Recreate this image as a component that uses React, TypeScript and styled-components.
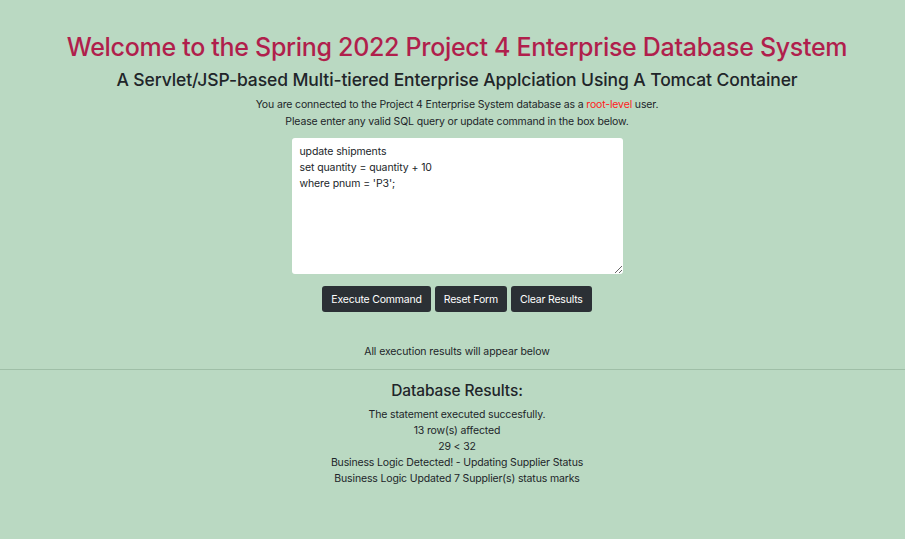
import React, { useState } from "react";
import styled, { createGlobalStyle } from "styled-components";

const GlobalStyle = createGlobalStyle`
  html, body {
    margin: 0;
    padding: 0;
    background: #bad9c2;
  }
  body {
    font-family: Inter, "Noto Sans", sans-serif;
    color: #212529;
  }
`;

const Page = styled.div`
  width: 100%;
  min-height: 539px;
  background: #bad9c2;
  padding-top: 30px;
  box-sizing: border-box;
  text-align: center;
`;

const Content = styled.div`
  padding-left: 9px;
`;

const Title = styled.h1`
  margin: 0;
  font-size: 25px;
  line-height: 34px;
  font-weight: 500;
  letter-spacing: -0.3px;
  color: #b01f4c;
`;

const Subtitle = styled.h2`
  margin: 0;
  font-size: 17.5px;
  line-height: 32px;
  font-weight: 500;
  letter-spacing: -0.1px;
  color: #212529;
`;

const Info = styled.p`
  margin: 0;
  font-size: 10.5px;
  line-height: 17px;
  letter-spacing: -0.15px;
`;

const RootLevel = styled.span`
  color: #ff1a1a;
`;

const Form = styled.form`
  display: flex;
  flex-direction: column;
  align-items: center;
  margin-top: 8px;
`;

const QueryBox = styled.textarea`
  width: 331px;
  height: 136px;
  box-sizing: border-box;
  padding: 6px 8px;
  border: none;
  border-radius: 3px;
  background: #ffffff;
  font-family: Inter, "Noto Sans", sans-serif;
  font-size: 10.5px;
  line-height: 16px;
  letter-spacing: -0.1px;
  color: #212529;
  resize: vertical;
  outline: none;
`;

const ButtonRow = styled.div`
  display: flex;
  gap: 4px;
  margin-top: 12px;
`;

const Button = styled.button`
  height: 26px;
  padding: 0 9px;
  border: none;
  border-radius: 3px;
  background: #2b3035;
  color: #ffffff;
  font-family: Inter, "Noto Sans", sans-serif;
  font-size: 10.5px;
  font-weight: 400;
  letter-spacing: -0.2px;
  cursor: pointer;
  &:hover {
    background: #1c1f23;
  }
`;

const Notice = styled.p`
  margin: 31px 0 0;
  font-size: 10.5px;
  line-height: 17px;
  letter-spacing: -0.1px;
`;

const Divider = styled.hr`
  margin: 9px 0 0;
  border: none;
  border-top: 1px solid #9fbfa7;
`;

const Results = styled.section`
  padding-top: 9px;
`;

const ResultsTitle = styled.h3`
  margin: 0 0 4px;
  font-size: 15.5px;
  line-height: 24px;
  font-weight: 500;
  letter-spacing: -0.1px;
`;

const ResultLine = styled.div`
  font-size: 10.5px;
  line-height: 16px;
  letter-spacing: -0.15px;
`;

const initialQuery = `update shipments
set quantity = quantity + 10
where pnum = 'P3';`;

const results = [
  "The statement executed succesfully.",
  "13 row(s) affected",
  "29 < 32",
  "Business Logic Detected! - Updating Supplier Status",
  "Business Logic Updated 7 Supplier(s) status marks",
];

export default function App() {
  const [query, setQuery] = useState<string>(initialQuery);
  const [lines, setLines] = useState<string[]>(results);

  return (
    <Page>
      <GlobalStyle />
      <Content>
        <Title>Welcome to the Spring 2022 Project 4 Enterprise Database System</Title>
        <Subtitle>A Servlet/JSP-based Multi-tiered Enterprise Applciation Using A Tomcat Container</Subtitle>
        <Info>
          You are connected to the Project 4 Enterprise System database as a <RootLevel>root-level</RootLevel> user.
        </Info>
        <Info>Please enter any valid SQL query or update command in the box below.</Info>
        <Form onSubmit={(e) => e.preventDefault()}>
          <QueryBox value={query} onChange={(e) => setQuery(e.target.value)} />
          <ButtonRow>
            <Button type="submit" onClick={() => setLines(results)}>Execute Command</Button>
            <Button type="button" onClick={() => setQuery("")}>Reset Form</Button>
            <Button type="button" onClick={() => setLines([])}>Clear Results</Button>
          </ButtonRow>
        </Form>
        <Notice>All execution results will appear below</Notice>
      </Content>
      <Divider />
      <Content>
        <Results>
          <ResultsTitle>Database Results:</ResultsTitle>
          {lines.map((line) => (
            <ResultLine key={line}>{line}</ResultLine>
          ))}
        </Results>
      </Content>
    </Page>
  );
}
